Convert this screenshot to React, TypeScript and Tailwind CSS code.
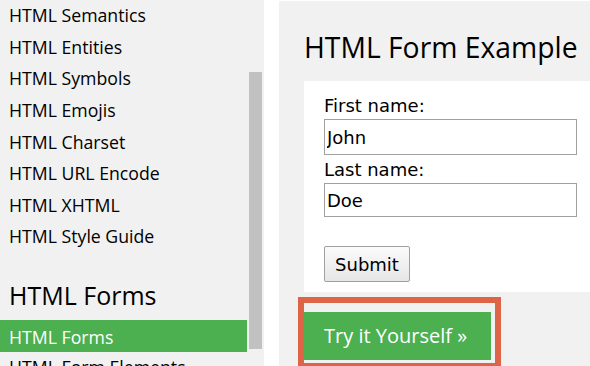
const sideFont = { fontFamily: '"Open Sans", "Noto Sans", sans-serif' };
const formFont = { fontFamily: '"DejaVu Sans", Verdana, sans-serif' };

const topics = [
  "HTML Semantics",
  "HTML Entities",
  "HTML Symbols",
  "HTML Emojis",
  "HTML Charset",
  "HTML URL Encode",
  "HTML XHTML",
  "HTML Style Guide",
];

function Sidebar() {
  return (
    <aside className="flex h-full w-[264px] shrink-0 bg-[#f1f1f1]" style={sideFont}>
      <nav className="w-[247px] shrink-0 text-[17.7px] text-black">
        {topics.map((topic) => (
          <div key={topic} className="h-[31.64px] whitespace-nowrap pl-[9px] leading-[31.64px]">
            {topic}
          </div>
        ))}
        <h2 className="mt-[23.6px] mb-[5.75px] pl-[9px] text-[25px] leading-[37.5px] font-normal">
          HTML Forms
        </h2>
        <div className="flex h-[32px] items-center bg-[#4CAF50] pl-[9px] pt-[3px] text-white">
          HTML Forms
        </div>
        <div className="h-[31.64px] whitespace-nowrap pl-[9px] leading-[31.64px]">
          HTML Form Elements
        </div>
      </nav>
      <div className="w-[17px] shrink-0">
        <div className="mt-[72px] ml-[2px] h-[277px] w-[13px] bg-[#c1c1c1]" />
      </div>
    </aside>
  );
}

function FormExample() {
  return (
    <div className="bg-white pt-[11px] pb-[10px] pl-[20px]" style={formFont}>
      <label className="block text-[18px] leading-[27px] text-black">First name:</label>
      <input
        type="text"
        defaultValue="John"
        className="block h-[36px] w-[253px] border border-[#a0a0a0] px-[2px] text-[18px] text-black outline-none"
        style={formFont}
      />
      <label className="block pt-px text-[18px] leading-[27px] text-black">Last name:</label>
      <input
        type="text"
        defaultValue="Doe"
        className="block h-[34px] w-[253px] border border-[#a0a0a0] px-[2px] text-[18px] text-black outline-none"
        style={formFont}
      />
      <button
        type="button"
        className="mt-[29px] block h-[36px] w-[86px] rounded-[2px] border border-[#a0a0a0] bg-gradient-to-b from-[#fbfbfb] to-[#e6e6e6] text-[18px] text-black"
        style={formFont}
      >
        Submit
      </button>
    </div>
  );
}

export default function App() {
  return (
    <div className="flex h-[366px] w-[590px] overflow-hidden bg-white">
      <Sidebar />
      <div className="w-[15px] shrink-0" />
      <main className="mt-px min-w-0 flex-1 bg-[#f1f1f1] pt-[24.5px] pl-[25px]">
        <h2 className="whitespace-nowrap text-[28.3px] leading-[42px] font-normal text-black" style={sideFont}>
          HTML Form Example
        </h2>
        <div className="mt-[13.5px]">
          <FormExample />
        </div>
        <div className="-ml-[6px] mt-[5px] w-[203px] border-[6px] border-[#dd6446] bg-[#f1f1f1] pt-[9px] pr-[4px] pb-[3px]">
          <div
            className="flex h-[48px] items-center whitespace-nowrap bg-[#4CAF50] pl-[20px] text-[20px] text-white"
            style={sideFont}
          >
            Try it Yourself »
          </div>
        </div>
      </main>
    </div>
  );
}
